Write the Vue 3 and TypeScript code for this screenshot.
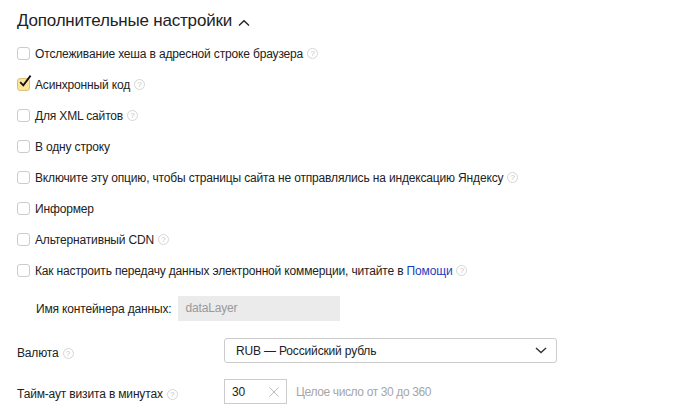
<script setup lang="ts">
const rows = [
  { text: 'Отслеживание хеша в адресной строке браузера', help: true },
  { text: 'Асинхронный код', help: true, checked: true },
  { text: 'Для XML сайтов', help: true },
  { text: 'В одну строку', help: false },
  { text: 'Включите эту опцию, чтобы страницы сайта не отправлялись на индексацию Яндексу', help: true },
  { text: 'Информер', help: false },
  { text: 'Альтернативный CDN', help: true },
]
</script>

<template>
  <main class="page">
    <h2 class="title">
      Дополнительные настройки
      <svg class="caret" width="12" height="8" viewBox="0 0 12 8"><path d="M1 6.5 6 1.8l5 4.7" fill="none" stroke="#222" stroke-width="1.4" /></svg>
    </h2>
    <ul class="list">
      <li v-for="r in rows" :key="r.text" class="row">
        <span class="box" :class="{ on: r.checked }">
          <svg v-if="r.checked" class="tick" width="16" height="16" viewBox="0 0 16 16"><path d="M3.2 8.2 6.3 11.4 13.6 1.6" fill="none" stroke="#111" stroke-width="1.8" /></svg>
        </span>
        <span class="label">{{ r.text }}</span>
        <span v-if="r.help" class="help">?</span>
      </li>
      <li class="row">
        <span class="box"></span>
        <span class="label">Как настроить передачу данных электронной коммерции, читайте в <a class="link">Помощи</a></span>
        <span class="help">?</span>
      </li>
    </ul>
    <div class="container-row">
      <span class="label">Имя контейнера данных:</span>
      <span class="disabled">dataLayer</span>
    </div>
    <div class="field currency">
      <div class="field-label"><span class="label">Валюта</span><span class="help">?</span></div>
      <div class="select">
        <span>RUB — Российский рубль</span>
        <svg width="12" height="7" viewBox="0 0 12 7"><path d="M1 1l5 4.5L11 1" fill="none" stroke="#333" stroke-width="1.4" /></svg>
      </div>
    </div>
    <div class="field timeout">
      <div class="field-label"><span class="label">Тайм-аут визита в минутах</span><span class="help">?</span></div>
      <div class="num">
        <span>30</span>
        <svg width="10" height="10" viewBox="0 0 10 10"><path d="M.5.5l9 9M9.5.5l-9 9" fill="none" stroke="#bbb" stroke-width="1" /></svg>
      </div>
      <span class="hint">Целое число от 30 до 360</span>
    </div>
  </main>
</template>

<style scoped>
.page {
  width: 686px;
  height: 415px;
  box-sizing: border-box;
  padding: 10px 0 0 17px;
  overflow: hidden;
  background: #fff;
  color: #222;
  font-family: "Liberation Sans", Arial, sans-serif;
  font-size: 12px;
  letter-spacing: -0.16px;
}
.title {
  display: flex;
  align-items: center;
  gap: 6px;
  margin: 0;
  height: 22px;
  font-size: 17px;
  line-height: 22px;
  font-weight: 400;
  letter-spacing: -0.2px;
}
.caret { margin-top: 3px; }
.list {
  list-style: none;
  margin: 6px 0 0;
  padding: 0;
}
.row {
  display: flex;
  align-items: center;
  height: 31px;
}
.box {
  position: relative;
  flex: none;
  width: 13px;
  height: 13px;
  margin-right: 5px;
  border: 1px solid #ccc;
  border-radius: 3px;
  box-sizing: border-box;
  background: #fff;
}
.box.on {
  background: #fce59a;
  border-color: #d8c27e;
}
.tick {
  position: absolute;
  left: -1px;
  top: -5px;
}
.help {
  flex: none;
  width: 11px;
  height: 11px;
  margin-left: 4px;
  border: 1px solid #d6d6d6;
  border-radius: 50%;
  box-sizing: border-box;
  color: #c4c4c4;
  font-size: 8px;
  line-height: 9px;
  text-align: center;
  letter-spacing: 0;
}
.link { color: #1a3dc1; }
.container-row {
  display: flex;
  align-items: center;
  height: 25px;
  margin-top: 10px;
  padding-left: 19px;
}
.disabled {
  width: 162px;
  height: 25px;
  margin-left: 7px;
  padding-left: 7px;
  box-sizing: border-box;
  background: #ebebeb;
  color: #999;
  line-height: 25px;
}
.field {
  display: flex;
  align-items: center;
}
.field-label {
  display: flex;
  align-items: center;
  width: 207px;
  padding-top: 5px;
  box-sizing: border-box;
}
.currency { margin-top: 17px; }
.select {
  display: flex;
  align-items: center;
  justify-content: space-between;
  width: 333px;
  height: 25px;
  padding: 0 9px 0 11px;
  box-sizing: border-box;
  border: 1px solid #ccc;
  border-radius: 3px;
}
.timeout { margin-top: 16px; }
.num {
  display: flex;
  align-items: center;
  justify-content: space-between;
  width: 63px;
  height: 25px;
  padding: 0 7px;
  box-sizing: border-box;
  border: 1px solid #ccc;
}
.hint {
  margin-left: 9px;
  color: #a6a6a6;
  letter-spacing: -0.37px;
}
</style>
